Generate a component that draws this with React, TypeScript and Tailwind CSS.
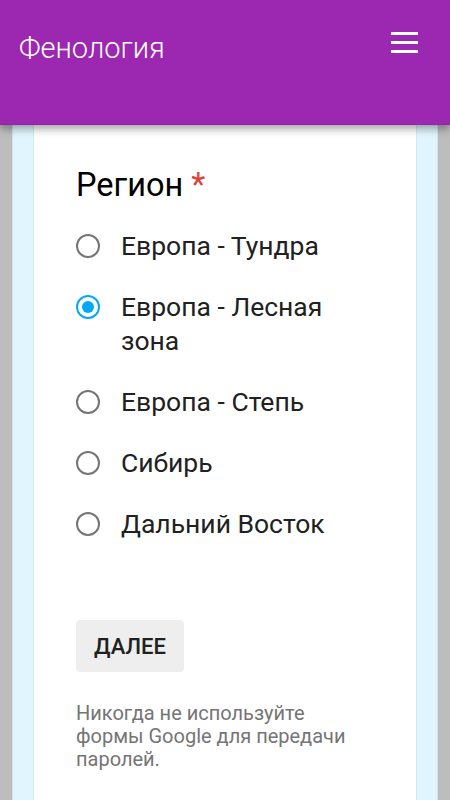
import React, { useState } from 'react';

const options = [
  'Европа - Тундра',
  'Европа - Лесная зона',
  'Европа - Степь',
  'Сибирь',
  'Дальний Восток',
];

const Radio: React.FC<{ checked: boolean }> = ({ checked }) => (
  <span
    className={
      checked
        ? 'mt-[5px] flex h-[24px] w-[24px] shrink-0 items-center justify-center rounded-full border-2 border-[#03a9f4]'
        : 'mt-[5px] flex h-[24px] w-[24px] shrink-0 items-center justify-center rounded-full border-2 border-[#757575]'
    }
  >
    {checked && <span className="h-[12px] w-[12px] rounded-full bg-[#03a9f4]" />}
  </span>
);

const App: React.FC = () => {
  const [selected, setSelected] = useState(1);

  return (
    <div className="flex min-h-screen flex-col bg-[#bdbdbd] font-['Roboto',sans-serif]">
      {/* Header */}
      <header className="relative z-10 flex h-[125px] items-start justify-between border-b border-[#8e24aa] bg-[#9c27b0] pl-[19px] pr-[32px] shadow-[0_4px_8px_rgba(0,0,0,0.35)]">
        <h1 className="mt-[28px] text-[29px] font-light leading-[40px] text-white">Фенология</h1>
        <button className="mt-[32px] flex w-[27px] flex-col gap-[6px]">
          <span className="h-[3px] w-full bg-white" />
          <span className="h-[3px] w-full bg-white" />
          <span className="h-[3px] w-full bg-white" />
        </button>
      </header>

      {/* Body */}
      <div className="mx-[12px] flex flex-1 flex-col border-x border-[#cfe3ee] bg-[#e1f5fe] px-[20px]">
        <main className="flex-1 border-x border-[#d8e6ee] bg-white px-[42px] pt-[40px] pb-[40px]">
          <h2 className="text-[32.5px] leading-[40px] text-black">
            Регион <span className="text-[#db4437]">*</span>
          </h2>

          <div className="mt-[24px] flex flex-col gap-[27px]">
            {options.map((o, i) => (
              <label
                key={o}
                className="flex cursor-pointer items-start gap-[21px]"
                onClick={() => setSelected(i)}
              >
                <Radio checked={selected === i} />
                <span className="text-[26.5px] leading-[34px] text-[#212121]">{o}</span>
              </label>
            ))}
          </div>

          <button className="mt-[79px] h-[52px] rounded-[4px] bg-[#eeeeee] px-[18px] text-[22px] font-medium text-[#212121]">
            ДАЛЕЕ
          </button>

          <p className="mt-[30px] text-[20px] leading-[23px] text-[#757575]">
            Никогда не используйте формы Google для передачи паролей.
          </p>
        </main>
      </div>
    </div>
  );
};

export default App;
